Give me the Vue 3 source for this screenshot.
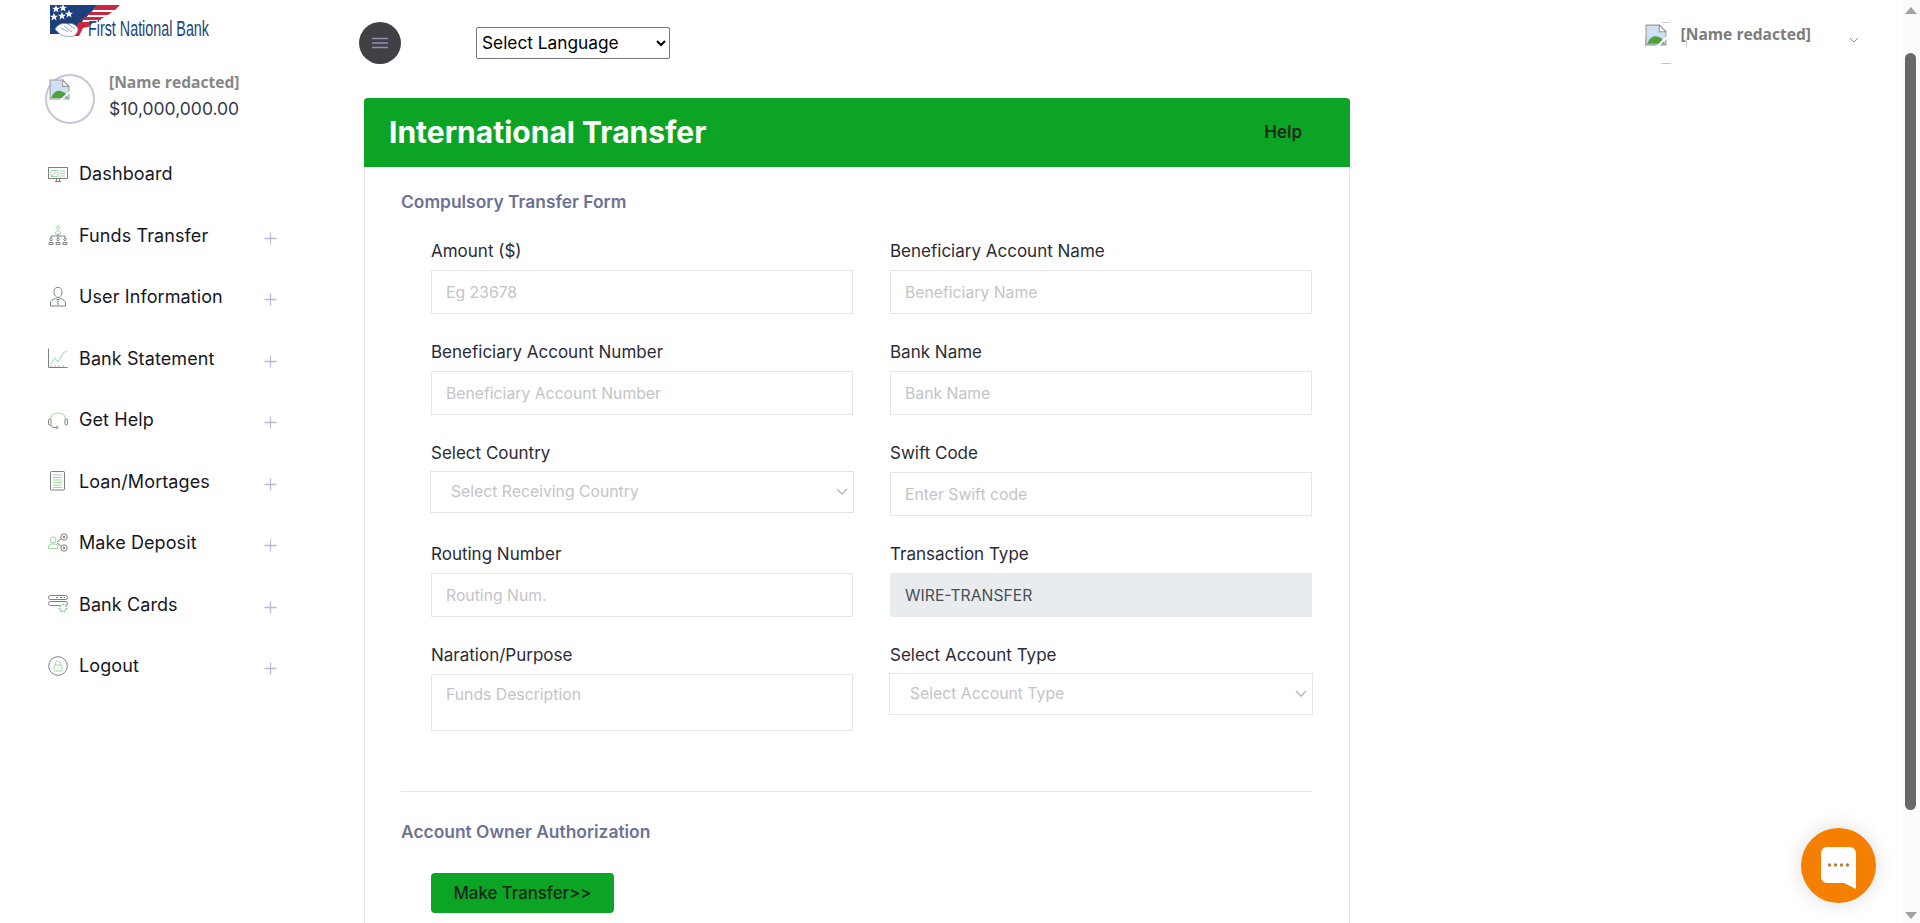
<template>
  <div class="page">
    <aside class="sidebar">
      <div class="logo">
        <svg width="240" height="40" viewBox="0 0 240 40">
          <defs>
            <polygon id="star" points="0,-4 1.2,-1.3 4,-1.2 1.8,0.6 2.5,3.4 0,1.8 -2.5,3.4 -1.8,0.6 -4,-1.2 -1.2,-1.3" fill="#fff" />
          </defs>
          <polygon points="0,0 48,0 26,23 24,29 0,29" fill="#1d3f7c" />
          <polygon points="48,0 70,0 65,5 43,5" fill="#c9283e" />
          <polygon points="41,7 62,7 58,10 37,10" fill="#c9283e" />
          <polygon points="35,12 54,12 50,15 31,15" fill="#c9283e" />
          <polygon points="29,17 44,17 38,22 33,23 29,31 25,31 24,25" fill="#c9283e" />
          <use v-for="s in stars" :key="s[0]" href="#star" :x="s[0]" :y="s[1]" />
          <path d="M5 24 C9 18 14 18 18 19 C22 17 28 21 28 25 C27 30 22 33 18 31 C13 32 9 29 5 24Z" fill="#fff" stroke="#7d8fb0" stroke-width=".8" />
          <path d="M11 23 L18 27 M14 21 L22 27 M18 19 L25 24" stroke="#6f86ad" stroke-width=".8" fill="none" />
          <text x="38" y="31" textLength="121" lengthAdjust="spacingAndGlyphs" class="logo-text">First National Bank</text>
        </svg>
      </div>

      <div class="profile">
        <div class="avatar">
          <svg class="broken" width="21" height="21" viewBox="0 0 20 20">
            <path d="M1 1 H13 L19 7 V19 H1Z" fill="#cfe0f6" stroke="#9a9a9a" />
            <path d="M13 1 V7 H19Z" fill="#fff" stroke="#9a9a9a" />
            <path d="M2 18 C5 10 10 10 15 13 L18 18Z" fill="#4fa33a" />
            <path d="M10 20 L20 11 V13 L13 20Z" fill="#fff" />
          </svg>
        </div>
        <div class="profile-text">
          <div class="profile-name">[Name redacted]</div>
          <div class="profile-balance">$10,000,000.00</div>
        </div>
      </div>

      <nav class="nav">
        <a v-for="item in navItems" :key="item.label" class="nav-item">
          <svg class="nav-icon" width="20" height="20" viewBox="0 0 20 20" fill="none" stroke-width="1" v-html="item.icon"></svg>
          <span class="nav-label">{{ item.label }}</span>
          <svg v-if="item.plus" class="nav-plus" width="13" height="13" viewBox="0 0 13 13">
            <path d="M6.5 0.5 V12.5 M0.5 6.5 H12.5" stroke="#b9b9da" stroke-width="1.3" />
          </svg>
        </a>
      </nav>
    </aside>

    <main class="main">
      <header class="topbar">
        <button class="menu-btn" aria-label="menu">
          <svg width="16" height="12" viewBox="0 0 16 12">
            <path d="M0 1.5 H16 M0 6 H16 M0 10.5 H16" stroke="#8d8fb0" stroke-width="1.4" />
          </svg>
        </button>
        <select class="lang">
          <option>Select Language</option>
        </select>
        <div class="user">
          <svg width="42" height="42" viewBox="0 0 42 42">
            <defs>
              <clipPath id="userClip"><circle cx="21" cy="21" r="21" /></clipPath>
            </defs>
            <rect x="0.5" y="0.5" width="41" height="41" fill="none" stroke="#bdbdbd" clip-path="url(#userClip)" />
            <g transform="translate(0 2) scale(1.1)">
              <path d="M1 1 H13 L19 7 V19 H1Z" fill="#cfe0f6" stroke="#9a9a9a" />
              <path d="M13 1 V7 H19Z" fill="#fff" stroke="#9a9a9a" />
              <path d="M2 18 C5 10 10 10 15 13 L18 18Z" fill="#4fa33a" />
              <path d="M10 20 L20 11 V13 L13 20Z" fill="#fff" />
            </g>
          </svg>
          <span class="user-name">[Name redacted]</span>
          <svg class="user-caret" width="10" height="6" viewBox="0 0 10 6">
            <path d="M1 1 L5 5 L9 1" stroke="#8a8eb0" stroke-width="1" fill="none" />
          </svg>
        </div>
      </header>

      <section class="card">
        <div class="card-head">
          <h1>International Transfer</h1>
          <span class="help">Help</span>
        </div>
        <div class="card-body">
          <h2 class="section-title">Compulsory Transfer Form</h2>
          <form class="form-grid" @submit.prevent>
            <div v-for="f in fields" :key="f.label" class="field">
              <label>{{ f.label }}</label>
              <div v-if="f.type === 'select'" class="select-wrap">
                <select class="control select"><option>{{ f.placeholder }}</option></select>
                <svg class="chev" width="12" height="8" viewBox="0 0 12 8">
                  <path d="M1 1 L6 6 L11 1" stroke="#bdbdbd" stroke-width="1.6" fill="none" />
                </svg>
              </div>
              <textarea v-else-if="f.type === 'area'" class="control area" :placeholder="f.placeholder"></textarea>
              <input v-else-if="f.type === 'readonly'" class="control readonly" :value="f.value" readonly />
              <input v-else class="control" :placeholder="f.placeholder" />
            </div>
          </form>
          <hr class="divider" />
          <h2 class="section-title">Account Owner Authorization</h2>
          <button class="submit">Make Transfer&gt;&gt;</button>
        </div>
      </section>
    </main>

    <button class="chat" aria-label="chat">
      <svg width="35" height="42" viewBox="0 0 35 42">
        <path d="M6 0 H29 A6 6 0 0 1 35 6 V42 L23 36 H6 A6 6 0 0 1 0 30 V6 A6 6 0 0 1 6 0Z" fill="#fff" />
        <circle cx="8.5" cy="18" r="1.7" fill="#c07a35" />
        <circle cx="14.5" cy="18" r="1.7" fill="#c07a35" />
        <circle cx="20.5" cy="18" r="1.7" fill="#c07a35" />
        <circle cx="26.5" cy="18" r="1.7" fill="#c07a35" />
      </svg>
    </button>

    <div class="scrollbar">
      <span class="arrow up"></span>
      <span class="thumb"></span>
      <span class="arrow down"></span>
    </div>
  </div>
</template>

<script setup>
const gray = 'stroke="#7f7f7f"'
const green = 'stroke="#9bdaa2"'

const stars = [
  [6, 4],
  [13, 3],
  [19, 9],
  [4, 12],
  [12, 11]
]

const navItems = [
  {
    label: 'Dashboard',
    icon: `<rect x="0.5" y="3.5" width="19" height="11" ${gray}/><path d="M3 6.5 H10 V12.5 H3Z" ${green}/><path d="M4 12 L8 8 M12 7 H17 M12 9.5 H17 M12 12 H17" ${green}/><path d="M7 17.5 H13 M8.5 14.5 V17.5 M11.5 14.5 V17.5" ${gray}/>`
  },
  {
    label: 'Funds Transfer',
    icon: `<circle cx="10" cy="2.5" r="1.6" ${green}/><path d="M7.5 8 C7.5 5 12.5 5 12.5 8 V9 H7.5Z" ${green}/><path d="M3 13 V11 H17 V13 M10 9 V13" ${gray}/><circle cx="3" cy="14.5" r="1.2" ${gray}/><circle cx="10" cy="14.5" r="1.2" ${gray}/><circle cx="17" cy="14.5" r="1.2" ${gray}/><path d="M1 19.5 V17.5 H5 V19.5Z M8 19.5 V17.5 H12 V19.5Z M15 19.5 V17.5 H19 V19.5Z" ${gray}/>`
  },
  {
    label: 'User Information',
    icon: `<path d="M10 0.5 C6.5 0.5 6 3 6 5 C6 8 8 10.5 10 10.5 C12 10.5 14 8 14 5 C14 3 13.5 0.5 10 0.5Z" ${gray}/><path d="M2.5 19 V16 C2.5 13.5 5 12.5 7.5 11.5 L10 13 L12.5 11.5 C15 12.5 17.5 13.5 17.5 16 V19Z" ${gray}/><path d="M10 13 V19" ${green} stroke-width="2"/>`
  },
  {
    label: 'Bank Statement',
    icon: `<path d="M0.5 0.5 V19.5 H19.5" ${gray}/><path d="M3 16 L7 10 L10 14 L15 5 L19 3" ${green}/><path d="M3 17 V19 M7 17 V19 M11 17 V19 M15 17 V19" ${gray} stroke-width=".6"/>`
  },
  {
    label: 'Get Help',
    icon: `<path d="M2.5 9 C3 1 17 1 17.5 9" ${green} stroke-width="1.2"/><rect x="0.5" y="9" width="2.5" height="6" rx="1.2" ${gray}/><rect x="17" y="9" width="2.5" height="6" rx="1.2" ${gray}/><path d="M3 15 C3 17 5 17.5 8 17.5" ${gray}/><circle cx="9" cy="17.5" r="1" ${gray}/>`
  },
  {
    label: 'Loan/Mortages',
    icon: `<rect x="2.5" y="0.5" width="14" height="18.5" rx="1" ${gray}/><path d="M5 4 H14 M5 6.5 H14 M5 9 H14 M5 11.5 H14 M5 14 H14 M5 16.5 H14" ${green}/>`
  },
  {
    label: 'Make Deposit',
    icon: `<circle cx="5" cy="7" r="3" ${green}/><path d="M0.5 15.5 V13 C0.5 11 3 11 5 11 C7 11 9.5 11 9.5 13 V15.5Z" ${green}/><path d="M9 9 L13 6 M9 10 L13 13" ${gray}/><circle cx="16" cy="4" r="3.2" ${gray}/><circle cx="16" cy="4" r="1.2" fill="#7f7f7f"/><circle cx="16" cy="15" r="3.2" ${gray}/><circle cx="16" cy="15" r="1.2" fill="#7f7f7f"/>`
  },
  {
    label: 'Bank Cards',
    icon: `<rect x="0.5" y="1.5" width="19" height="4" rx="2" ${gray}/><rect x="0.5" y="7.5" width="19" height="4" rx="2" ${gray}/><path d="M8 3.5 H10 M12 3.5 H14 M15.5 3.5 H17" ${gray}/><circle cx="15" cy="14" r="3.5" fill="#fff" stroke="#8fd898" stroke-width="2" stroke-dasharray="2 1"/>`
  },
  {
    label: 'Logout',
    icon: `<circle cx="10" cy="10" r="9.3" ${gray}/><rect x="6" y="9" width="8" height="6" rx="1" ${green}/><path d="M7.5 9 V7.5 C7.5 4.5 12.5 4.5 12.5 7.5 V9 M10 11.5 V12.5" ${green}/>`
  }
].map((item, i) => ({ ...item, plus: i > 0 }))

const fields = [
  { label: 'Amount ($)', placeholder: 'Eg 23678' },
  { label: 'Beneficiary Account Name', placeholder: 'Beneficiary Name' },
  { label: 'Beneficiary Account Number', placeholder: 'Beneficiary Account Number' },
  { label: 'Bank Name', placeholder: 'Bank Name' },
  { label: 'Select Country', placeholder: 'Select Receiving Country', type: 'select' },
  { label: 'Swift Code', placeholder: 'Enter Swift code' },
  { label: 'Routing Number', placeholder: 'Routing Num.' },
  { label: 'Transaction Type', value: 'WIRE-TRANSFER', type: 'readonly' },
  { label: 'Naration/Purpose', placeholder: 'Funds Description', type: 'area' },
  { label: 'Select Account Type', placeholder: 'Select Account Type', type: 'select' }
]
</script>

<style>
html,
body {
  margin: 0;
  height: 100%;
  overflow: hidden;
  background: #fff;
}
</style>

<style scoped>
.page {
  display: flex;
  height: 923px;
  overflow: hidden;
  font-family: Inter, "Noto Sans", sans-serif;
  color: #1b1b28;
  background: #fff;
}

.sidebar {
  width: 359px;
  flex-shrink: 0;
  padding: 5px 0 0 48px;
  box-sizing: border-box;
}

.logo {
  height: 34px;
  margin-left: 2px;
}

.logo svg {
  display: block;
}

.logo-text {
  font-family: "Liberation Sans", sans-serif;
  font-size: 22px;
  fill: #1c4580;
}

.profile {
  display: flex;
  align-items: center;
  height: 50px;
  margin: 35px 0 0 -3px;
}

.avatar {
  width: 50px;
  height: 50px;
  border: 2px solid #c6c6d8;
  border-radius: 50%;
  box-sizing: border-box;
  position: relative;
}

.broken {
  position: absolute;
  left: 2px;
  top: 3px;
}

.profile-text {
  margin-left: 14px;
  padding-bottom: 5px;
}

.profile-name,
.user-name {
  font-family: "Open Sans", sans-serif;
  font-weight: 700;
  font-size: 15.6px;
  line-height: 20px;
  color: #868686;
}

.profile-balance {
  font-size: 17.5px;
  line-height: 26px;
  margin-top: 4px;
  color: #2f3a4c;
}

.nav {
  margin-top: 19px;
}

.nav-item {
  display: flex;
  align-items: center;
  height: 61.5px;
}

.nav-icon {
  flex-shrink: 0;
}

.nav-label {
  margin-left: 11px;
  font-size: 18px;
  letter-spacing: 0.1px;
  color: #16161f;
}

.nav-plus {
  position: relative;
  top: 3px;
  margin-left: auto;
  margin-right: 82px;
}

.main {
  flex: 1;
  padding-right: 17px;
  min-width: 0;
}

.topbar {
  display: flex;
  align-items: center;
  height: 98px;
  padding-bottom: 12px;
  box-sizing: border-box;
}

.menu-btn {
  width: 42px;
  height: 42px;
  border: none;
  border-radius: 50%;
  background: #404045;
  display: flex;
  align-items: center;
  justify-content: center;
  padding: 0;
}

.lang {
  margin-left: 75px;
  width: 194px;
  height: 32px;
  padding: 0 0 1px 1px;
  font-family: Inter, sans-serif;
  font-size: 17.3px;
  color: #000;
  background: #fff;
  border: 1px solid #767676;
  border-radius: 2px;
}

.user {
  display: flex;
  align-items: flex-start;
  align-self: flex-start;
  margin: 22px 44px 0 auto;
}

.user-name {
  position: relative;
  margin: 2px 0 0 -6px;
  color: #7c7c7c;
}

.user-caret {
  margin: 15px 0 0 38px;
}

.card {
  width: 986px;
  margin-left: 5px;
  border: solid #e6e6e6;
  border-width: 0 1px;
  box-sizing: border-box;
}

.card-head {
  display: flex;
  align-items: center;
  justify-content: space-between;
  height: 69px;
  margin: 0 -1px;
  padding: 0 48px 2px 25px;
  box-sizing: border-box;
  background: #0ca424;
  border-radius: 4px 4px 0 0;
}

.card-head h1 {
  margin: 0;
  font-size: 30px;
  font-weight: 700;
  color: #fff;
}

.help {
  font-size: 17px;
  font-weight: 600;
  color: #152a1c;
}

.card-body {
  padding: 23px 37px 40px 36px;
}

.section-title {
  margin: 0;
  font-size: 17.4px;
  line-height: 24px;
  font-weight: 600;
  color: #6c7293;
}

.form-grid {
  display: grid;
  grid-template-columns: 422px 422px;
  column-gap: 37px;
  row-gap: 26px;
  margin: 25px 0 0 30px;
}

.field label {
  display: block;
  font-size: 17px;
  line-height: 24px;
  margin-bottom: 7px;
  color: #2b2b36;
}

.control {
  display: block;
  width: 100%;
  height: 44px;
  padding: 0 14px;
  box-sizing: border-box;
  font-family: inherit;
  font-size: 15.75px;
  color: #495057;
  background: #fff;
  border: 1px solid #e6e6e6;
  outline: none;
}

.control::placeholder {
  color: #c4c4c8;
  opacity: 1;
}

.select-wrap {
  position: relative;
  margin: -1px -1px 0;
}

.select {
  height: 42px;
  padding: 0 14px 2px 20px;
  appearance: none;
  color: #c4c4c8;
}

.chev {
  position: absolute;
  right: 6px;
  top: 17px;
}

.area {
  height: 57px;
  padding-top: 10px;
  resize: none;
}

.readonly {
  background: #e9ecef;
  border-color: #e9ecef;
}

.divider {
  margin: 60px 0 0;
  border: none;
  border-top: 1px solid #e6e6e6;
}

.divider + .section-title {
  margin-top: 28px;
}

.submit {
  display: block;
  width: 183px;
  height: 40px;
  margin: 29px 0 0 30px;
  padding: 0 0 1px;
  border: none;
  border-radius: 4px;
  background: #0ca424;
  font-family: inherit;
  font-size: 16.8px;
  font-weight: 500;
  color: #12281a;
}

.chat {
  position: fixed;
  left: 1801px;
  top: 828px;
  width: 75px;
  height: 75px;
  padding: 0;
  border: none;
  border-radius: 50%;
  background: #f57f00;
  box-shadow: 0 0 20px rgba(0, 0, 0, 0.14);
  display: flex;
  align-items: center;
  justify-content: center;
}

.chat svg {
  position: relative;
  top: 2px;
}

.scrollbar {
  position: fixed;
  top: 0;
  right: 0;
  width: 17px;
  height: 923px;
  background: #fbfbfb;
}

.thumb {
  position: absolute;
  left: 2px;
  top: 53px;
  width: 11px;
  height: 757px;
  border-radius: 6px;
  background: #686868;
}

.arrow {
  position: absolute;
  left: 2px;
  border-left: 6.5px solid transparent;
  border-right: 6.5px solid transparent;
}

.up {
  top: 7px;
  border-bottom: 7px solid #a3a3a3;
}

.down {
  bottom: 4px;
  border-top: 7px solid #a3a3a3;
}
</style>
